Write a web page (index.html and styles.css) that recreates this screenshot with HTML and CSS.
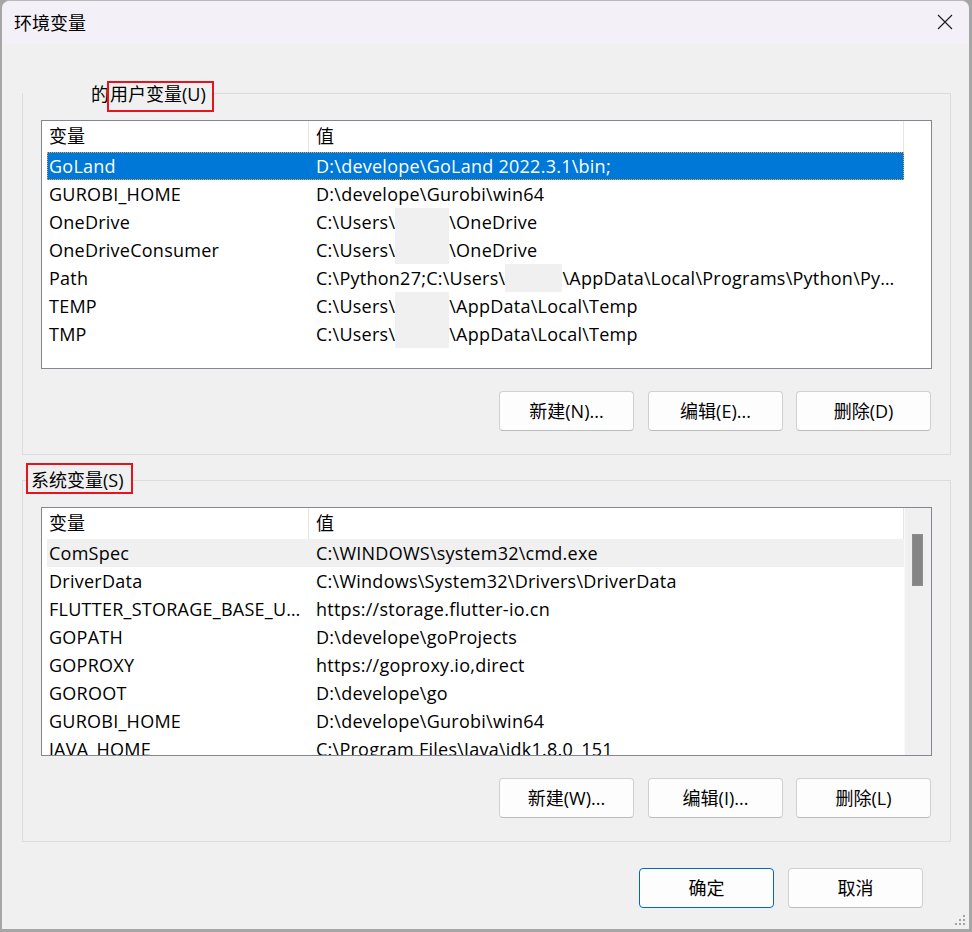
FILE: index.html
```html
<!DOCTYPE html>
<html lang="zh-CN">
<head>
<meta charset="utf-8">
<title>环境变量</title>
<link rel="stylesheet" href="styles.css">
</head>
<body>
<div class="window">
  <div class="titlebar">
    <span class="title">环境变量</span>
    <svg class="close" width="16" height="16" viewBox="0 0 16 16"><path d="M1 1 L15 15 M15 1 L1 15" stroke="#1a1a1a" stroke-width="1.1" fill="none"/></svg>
  </div>
  <div class="content">
    <div class="group g1">
      <div class="legend"><span class="blank"></span><span class="pre">的</span><span class="mark">用户变量(U)</span></div>
      <div class="list">
        <div class="list-main">
          <div class="header"><div class="hcell c1">变量</div><div class="hcell c2">值</div></div>
          <div class="rows">
            <div class="row selected"><span class="c1">GoLand</span><span class="c2">D:\develope\GoLand 2022.3.1\bin;</span></div>
            <div class="row"><span class="c1">GUROBI_HOME</span><span class="c2">D:\develope\Gurobi\win64</span></div>
            <div class="row"><span class="c1">OneDrive</span><span class="c2">C:\Users\<span class="redact"></span>\OneDrive</span></div>
            <div class="row"><span class="c1">OneDriveConsumer</span><span class="c2">C:\Users\<span class="redact"></span>\OneDrive</span></div>
            <div class="row"><span class="c1">Path</span><span class="c2">C:\Python27;C:\Users\<span class="redact wide"></span>\AppData\Local\Programs\Python\Python37\Scripts\;C:\Users</span></div>
            <div class="row"><span class="c1">TEMP</span><span class="c2">C:\Users\<span class="redact"></span>\AppData\Local\Temp</span></div>
            <div class="row"><span class="c1">TMP</span><span class="c2">C:\Users\<span class="redact"></span>\AppData\Local\Temp</span></div>
          </div>
        </div>
      </div>
      <div class="buttons">
        <button class="btn">新建(N)...</button>
        <button class="btn b2">编辑(E)...</button>
        <button class="btn b3">删除(D)</button>
      </div>
    </div>

    <div class="group g2">
      <div class="legend"><span class="mark">系统变量(S)</span></div>
      <div class="list">
        <div class="list-main">
          <div class="header"><div class="hcell c1">变量</div><div class="hcell c2">值</div></div>
          <div class="rows">
            <div class="row inactive"><span class="c1">ComSpec</span><span class="c2">C:\WINDOWS\system32\cmd.exe</span></div>
            <div class="row"><span class="c1">DriverData</span><span class="c2">C:\Windows\System32\Drivers\DriverData</span></div>
            <div class="row"><span class="c1">FLUTTER_STORAGE_BASE_URL</span><span class="c2">https://storage.flutter-io.cn</span></div>
            <div class="row"><span class="c1">GOPATH</span><span class="c2">D:\develope\goProjects</span></div>
            <div class="row"><span class="c1">GOPROXY</span><span class="c2">https://goproxy.io,direct</span></div>
            <div class="row"><span class="c1">GOROOT</span><span class="c2">D:\develope\go</span></div>
            <div class="row"><span class="c1">GUROBI_HOME</span><span class="c2">D:\develope\Gurobi\win64</span></div>
            <div class="row"><span class="c1">JAVA_HOME</span><span class="c2">C:\Program Files\Java\jdk1.8.0_151</span></div>
          </div>
        </div>
        <div class="scrollbar"><div class="thumb"></div></div>
      </div>
      <div class="buttons">
        <button class="btn">新建(W)...</button>
        <button class="btn b2">编辑(I)...</button>
        <button class="btn b3">删除(L)</button>
      </div>
    </div>

    <div class="footer">
      <button class="btn primary">确定</button>
      <button class="btn cancel">取消</button>
    </div>
  </div>
  <svg class="grip" width="11" height="11" viewBox="0 0 11 11"><g fill="#a3a3a3"><rect x="8" y="0" width="2" height="2"/><rect x="4" y="4" width="2" height="2"/><rect x="8" y="4" width="2" height="2"/><rect x="0" y="8" width="2" height="2"/><rect x="4" y="8" width="2" height="2"/><rect x="8" y="8" width="2" height="2"/></g></svg>
</div>
</body>
</html>
```

FILE: styles.css
```css
* { box-sizing: border-box; }
html, body { margin: 0; padding: 0; }
body {
  background: #a6a6a6;
  width: 972px;
  height: 932px;
  overflow: hidden;
  font-family: "Open Sans", "Noto Sans CJK SC", sans-serif;
  font-size: 18px;
  color: #000;
}
.window {
  position: relative;
  margin-left: 2px;
  width: 967px;
  height: 929px;
  background: #f0f0f0;
  border-top: 1px solid #b8b8b8;
  border-radius: 8px 8px 0 0;
  overflow: hidden;
}
.titlebar {
  height: 43px;
  background: #f4f0f7;
  display: flex;
  align-items: center;
  justify-content: space-between;
  padding: 0 16px 0 12px;
}
.title { font-size: 18px; line-height: 24px; }
.close { display: block; margin-top: -1px; }

.content { padding: 0 18px 0 20px; }

.group {
  border: 1px solid #dcdcdc;
  display: flex;
  flex-direction: column;
}
.g1 { margin-top: 49px; }
.g2 { margin-top: 25px; }

.legend {
  display: flex;
  align-items: flex-start;
  height: 30px;
  width: max-content;
  background: #f0f0f0;
  line-height: 24px;
}
.g1 .legend { margin-top: -15px; }
.g2 .legend { margin-top: -15px; margin-left: 3px; }
.blank { width: 68px; height: 30px; }
.pre { margin-top: 3px; }
.mark {
  border: 2px solid #e5141e;
  height: 31px;
}
.g1 .mark { margin-top: 2px; margin-left: -2px; padding: 0 6px 5px 1px; line-height: 22px; }
.g2 .mark { margin-top: -3px; padding: 3px 7px 0 3px; }

.list {
  margin: 11px 0 0 18px;
  width: 891px;
  height: 249px;
  border: 1px solid #828790;
  background: #fff;
  display: flex;
  overflow: hidden;
}
.list-main { width: 862px; flex: none; }
.header {
  display: flex;
  height: 31px;
  line-height: 31px;
}
.hcell { padding-left: 7px; white-space: nowrap; }
.hcell.c1 { width: 267px; border-right: 1px solid #e5e5e5; }
.hcell.c2 { width: 595px; border-right: 1px solid #e5e5e5; }

.rows { margin-left: 5px; letter-spacing: 0.25px; }
.row {
  display: flex;
  height: 28px;
  line-height: 28px;
  white-space: nowrap;
  width: 857px;
}
.row .c1 {
  width: 262px;
  flex: none;
  padding: 0 8px 0 2px;
  overflow: hidden;
  text-overflow: ellipsis;
}
.row .c2 {
  width: 595px;
  flex: none;
  padding: 0 4px 0 7px;
  overflow: hidden;
  text-overflow: ellipsis;
}
.row.selected {
  background: #0078d7;
  color: #fff;
  outline: 1px dotted #f0a040;
  outline-offset: -1px;
}
.row.inactive { background: #f0f0f0; }
.redact {
  display: inline-block;
  width: 54px;
  height: 28px;
  background: #f0f0f0;
  vertical-align: top;
}
.redact.wide { width: 57px; }

.scrollbar {
  width: 27px;
  flex: none;
  background: #f0f0f0;
  border-left: 1px solid #fafafa;
  padding: 26px 0 0 7px;
}
.thumb {
  width: 11px;
  height: 52px;
  background: #858585;
  border: 1px solid #8d8d8d;
}

.buttons {
  display: flex;
  justify-content: flex-end;
  margin: 22px 19px 23px 0;
}
.btn {
  width: 135px;
  height: 40px;
  background: #fdfdfd;
  border: 1px solid #d0d0d0;
  border-bottom-color: #bcbcbc;
  border-radius: 4px;
  font-family: "Open Sans", "Noto Sans CJK SC", sans-serif;
  font-size: 18px;
  color: #000;
  padding: 0;
  line-height: 24px;
}
.b2 { margin-left: 14px; }
.b3 { margin-left: 13px; }

.footer {
  display: flex;
  justify-content: flex-end;
  margin-top: 26px;
  padding-right: 28px;
}
.btn.primary { border: 1px solid #0067c0; }
.btn.cancel { margin-left: 14px; }

.grip {
  position: absolute;
  right: 3px;
  bottom: 3px;
}
```
